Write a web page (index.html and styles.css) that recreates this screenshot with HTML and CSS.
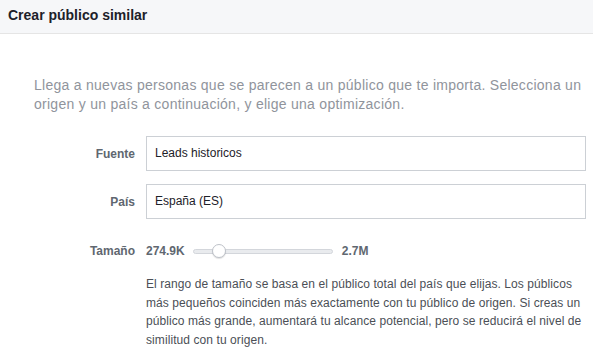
FILE: index.html
```html
<!DOCTYPE html>
<html lang="es">
<head>
<meta charset="utf-8">
<title>Crear público similar</title>
<link rel="stylesheet" href="styles.css">
</head>
<body>
<div class="dialog">
  <div class="header">Crear público similar</div>
  <div class="content">
    <p class="intro">Llega a nuevas personas que se parecen a un público que te importa. Selecciona un origen y un país a continuación, y elige una optimización.</p>
    <div class="form">
      <div class="label">Fuente</div>
      <div class="field">Leads historicos</div>
      <div class="label">País</div>
      <div class="field">España (ES)</div>
      <div class="label size-label">Tamaño</div>
      <div class="size-row">
        <span class="size-val">274.9K</span>
        <div class="slider"><div class="track"></div><div class="thumb"></div></div>
        <span class="size-val">2.7M</span>
      </div>
      <div></div>
      <p class="desc">El rango de tamaño se basa en el público total del país que elijas. Los públicos más pequeños coinciden más exactamente con tu público de origen. Si creas un público más grande, aumentará tu alcance potencial, pero se reducirá el nivel de similitud con tu origen.</p>
    </div>
  </div>
</div>
</body>
</html>
```
FILE: styles.css
```css
* { box-sizing: border-box; }
html, body { margin: 0; padding: 0; background: #fff; }
body { font-family: "Liberation Sans", Arial, sans-serif; color: #1d2129; }
.dialog { width: 593px; height: 361px; overflow: hidden; }
.header {
  height: 34px;
  background: #f6f7f9;
  border-bottom: 1px solid #e5e5e5;
  padding-left: 8px;
  font-size: 14px;
  font-weight: bold;
  line-height: 31px;
  color: #1d2129;
}
.content { padding: 42px 7px 0 34px; }
.intro {
  margin: 0;
  font-size: 14px;
  line-height: 19px;
  letter-spacing: 0.27px;
  color: #90949c;
}
.form {
  display: grid;
  grid-template-columns: 101px 1fr;
  column-gap: 11px;
  row-gap: 13px;
  margin-top: 22px;
  align-items: center;
}
.label {
  text-align: right;
  font-size: 12px;
  font-weight: bold;
  color: #606770;
}
.field {
  height: 35px;
  border: 1px solid #ccd0d5;
  padding: 0 8px;
  font-size: 12px;
  line-height: 33px;
  color: #1d2129;
}
.size-label { margin-top: 12px; }
.size-row {
  display: flex;
  align-items: center;
  margin-top: 12px;
  gap: 8px;
}
.size-val { font-size: 12px; font-weight: bold; color: #606770; }
.slider { position: relative; width: 140px; height: 14px; margin: 0 1px 0 0; }
.track {
  position: absolute; left: 0; right: 0; top: 5px; height: 5px;
  border-radius: 3px;
  background: #e9ebee;
  border: 1px solid #d3d6db;
}
.thumb {
  position: absolute; left: 19px; top: 0; width: 14px; height: 14px;
  border-radius: 50%;
  background: #fff;
  border: 1px solid #bec2c9;
  box-shadow: 0 1px 1px rgba(0,0,0,0.12);
}
.desc {
  margin: 4px 0 0;
  font-size: 12px;
  line-height: 18.7px;
  letter-spacing: 0.08px;
  color: #4b4f56;
}
```
